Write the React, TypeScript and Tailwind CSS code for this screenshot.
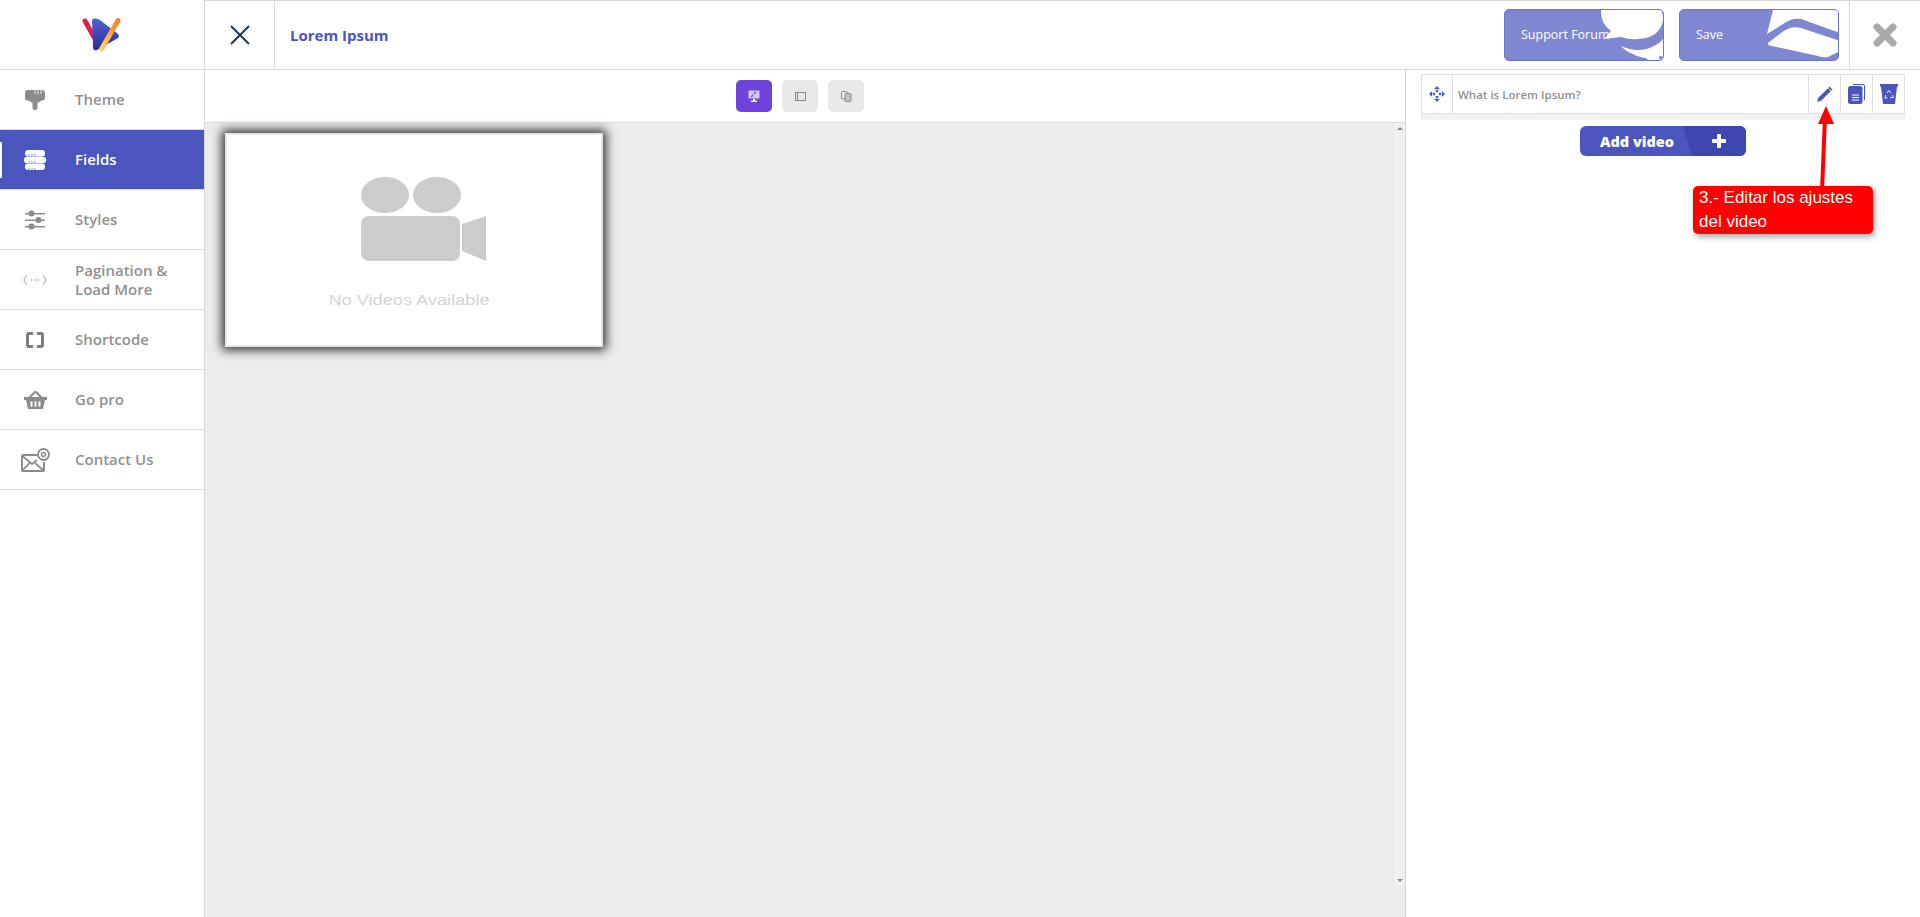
import type { ReactNode } from "react";

const Logo = () => (
  <svg width="40" height="36" viewBox="0 0 40 36">
    <defs>
      <linearGradient id="blue" x1="0" y1="0" x2="0" y2="1">
        <stop offset="0" stopColor="#4f63d2" />
        <stop offset="1" stopColor="#2a2c96" />
      </linearGradient>
      <linearGradient id="orange" x1="1" y1="0" x2="0" y2="1">
        <stop offset="0" stopColor="#f58220" />
        <stop offset="1" stopColor="#fdd267" />
      </linearGradient>
    </defs>
    <path d="M3 4 L12 20" stroke="#e0204f" strokeWidth="5" strokeLinecap="round" />
    <path d="M13 1.500 Q10 1 10 4 L11 30 Q11 34 15 33 L36 21 Q38 19 36 17 L18 3 Q15 1 13 1.500Z" fill="url(#blue)" />
    <path d="M36 3.500 L19.500 32" stroke="url(#orange)" strokeWidth="5" strokeLinecap="round" />
  </svg>
);

const BrushIcon = () => (
  <svg width="20" height="20" viewBox="0 0 20 20" fill="#8b8b8b">
    <path d="M3 0H17Q20 0 20 3V8Q20 10 17 10.500L13 12.500H7L3 10.500Q0 10 0 8V3Q0 0 3 0z" />
    <path d="M7.500 12h5v6q0 2-2.500 2t-2.500-2z" />
    <path d="M10 0v4M13 0v5M16 0v4" stroke="#fff" strokeWidth="0.800" />
  </svg>
);

const FieldsIcon = () => (
  <svg width="22" height="20" viewBox="0 0 22 20" fill="#fff">
    <rect x="1" y="0" width="20" height="6.400" rx="3" />
    <rect x="0" y="6.800" width="22" height="6.400" rx="3" />
    <rect x="1" y="13.600" width="20" height="6.400" rx="3" />
    <path d="M5 4v2M8 4v2M11 4v2M5 11v2M8 11v2M11 11v2M5 18v2M8 18v2M11 18v2" stroke="#4a55bd" strokeWidth="0.700" />
  </svg>
);

const SlidersIcon = () => (
  <svg width="20" height="20" viewBox="0 0 20 20" fill="#8b8b8b">
    <rect x="0" y="3" width="20" height="1.500" />
    <rect x="0" y="9.500" width="20" height="1.500" />
    <rect x="0" y="16" width="20" height="1.500" />
    <circle cx="6.500" cy="3.500" r="3" />
    <circle cx="13.500" cy="10" r="3" />
    <circle cx="6.500" cy="16.500" r="3" />
  </svg>
);

const DotsIcon = () => (
  <svg width="24" height="12" viewBox="0 0 24 12" fill="none" stroke="#8b8b8b" strokeWidth="0.800">
    <path d="M4 1 L0.800 6 L4 11 M20 1 L23.200 6 L20 11" />
    <path d="M8 6h1M11.500 6h1M15 6h1" strokeWidth="1.600" />
  </svg>
);

const BracketsIcon = () => (
  <svg width="18" height="16" viewBox="0 0 18 16" fill="none" stroke="#7d7d7d" strokeWidth="3">
    <path d="M7 1.500H3Q1.500 1.500 1.500 3v10q0 1.500 1.500 1.500h4M11 1.500h4q1.500 0 1.500 1.500v10q0 1.500-1.500 1.500h-4" />
  </svg>
);

const BasketIcon = () => (
  <svg width="23" height="18" viewBox="0 0 23 18" fill="#8b8b8b">
    <path d="M0 6h23v3H0z" />
    <path d="M2 9h19l-2 9H4zM6.500 10.500v5h2v-5zM10.500 10.500v5h2v-5zM14.500 10.500v5h2v-5z" fillRule="evenodd" />
    <path d="M5 7l6.500-6.500L18 7" fill="none" stroke="#8b8b8b" strokeWidth="2" />
  </svg>
);

const MailIcon = () => (
  <svg width="29" height="24" viewBox="0 0 29 24" fill="none" stroke="#8b8b8b" strokeWidth="1.500">
    <path d="M16 7H2.500Q1 7 1 8.500v13.500q0 1 1 1h20q1 0 1-1v-8" strokeWidth="2" />
    <path d="M1.500 8L11 16l5-4M1.500 22.500L9 14.500M22.500 22.500L14 15" strokeWidth="1.800" />
    <circle cx="22.500" cy="6.500" r="5.500" strokeWidth="1.800" />
    <circle cx="22.500" cy="6.500" r="2" />
  </svg>
);

const MoveIcon = () => (
  <svg width="16" height="16" viewBox="0 0 16 16" fill="#4a55bd">
    <path d="M8 0l3 3.200H5zM8 16l-3-3.200h6zM0 8l3.200-3v6zM16 8l-3.200 3V5z" />
    <rect x="6.800" y="4" width="2.400" height="2" />
    <rect x="6.800" y="10" width="2.400" height="2" />
    <rect x="4" y="6.800" width="2" height="2.400" />
    <rect x="10" y="6.800" width="2" height="2.400" />
  </svg>
);

const PencilIcon = () => (
  <svg width="18" height="18" viewBox="0 0 18 18">
    <path d="M13.500 1.500l3 3L5 16l-4 1 1-4z" fill="#4a55bd" stroke="#c9cdf0" strokeWidth="0.800" />
    <path d="M12 3l3 3" stroke="#fff" strokeWidth="0.800" />
  </svg>
);

const CopyIcon = () => (
  <svg width="17" height="20" viewBox="0 0 17 20">
    <path d="M5 0.500h10q1.500 0 1.500 1.500v14" fill="none" stroke="#4a55bd" strokeWidth="1" />
    <rect x="0" y="2" width="14.500" height="18" rx="2.500" fill="#4a55bd" />
    <path d="M4 11h7M4 13.500h7M4 16h7" stroke="#fff" strokeWidth="1" />
  </svg>
);

const RecycleIcon = () => (
  <svg width="18" height="20" viewBox="0 0 18 20">
    <path d="M0 0h18v2.500h-1L15 20H3L1 2.500H0z" fill="#4a55bd" />
    <path d="M7 9l2-2.500L11 9M12.500 11l.800 2.500h-3M7.500 14H4.800l1.200-3" fill="none" stroke="#fff" strokeWidth="0.900" />
  </svg>
);

const DisplayIcon = ({ color }: { color: string }) => (
  <svg width="12" height="12" viewBox="0 0 12 12">
    <rect x="0.500" y="0.500" width="11" height="8" fill={color} opacity="0.700" />
    <path d="M3 7l2-2M6 4l2-2" stroke="#6f42dc" strokeWidth="1.200" />
    <path d="M5 9h2v1.500h2V12H3v-1.500h2z" fill={color} />
  </svg>
);

const TabletIcon = () => (
  <svg width="11" height="9" viewBox="0 0 11 9" fill="none" stroke="#8a8a8a">
    <rect x="0.500" y="0.500" width="10" height="8" />
    <path d="M2.500 0.500v8" strokeWidth="1" />
  </svg>
);

const PhonesIcon = () => (
  <svg width="11" height="11" viewBox="0 0 11 11" fill="none" stroke="#8a8a8a">
    <rect x="0.500" y="0.500" width="6" height="7.500" rx="1" />
    <rect x="4" y="2.500" width="6" height="8" rx="1" fill="#c2c2c2" />
  </svg>
);

const items: { label: ReactNode; icon: ReactNode; active?: boolean }[] = [
  { label: "Theme", icon: <BrushIcon /> },
  { label: "Fields", icon: <FieldsIcon />, active: true },
  { label: "Styles", icon: <SlidersIcon /> },
  { label: <>Pagination &<br />Load More</>, icon: <DotsIcon /> },
  { label: "Shortcode", icon: <BracketsIcon /> },
  { label: "Go pro", icon: <BasketIcon /> },
  { label: "Contact Us", icon: <MailIcon /> },
];

function Sidebar() {
  return (
    <aside className="w-[205px] shrink-0 border-r border-[#d9d9d9] bg-white">
      <div className="h-[70px] flex items-center justify-center border-b border-[#d9d9d9] pr-[1px]">
        <Logo />
      </div>
      {items.map((item, i) => (
        <div
          key={i}
          className={`relative h-[60px] flex items-center border-b border-[#dcdcdc] ${item.active ? "bg-[#4a55bd] text-white" : "text-[#909090]"}`}
        >
          {item.active && <div className="absolute left-0 top-[12px] w-[2px] h-[36px] bg-white" />}
          <div className="w-[70px] mr-[5px] flex justify-center shrink-0">{item.icon}</div>
          <div className="text-[15px] leading-[19px] font-semibold">{item.label}</div>
        </div>
      ))}
    </aside>
  );
}

function Header() {
  return (
    <header className="h-[70px] flex border-t border-b border-[#d9d9d9] bg-white">
      <div className="w-[70px] flex items-center justify-center border-r border-[#d9d9d9]">
        <svg width="20" height="20" viewBox="0 0 20 20" stroke="#1d3557" strokeWidth="2">
          <path d="M1 1l18 18M19 1L1 19" />
        </svg>
      </div>
      <div className="flex-1 flex items-center pl-[15px] text-[15px] font-bold text-[#4a55bd]">Lorem Ipsum</div>
      <div className="flex items-center gap-[15px] pr-[10px]">
        <button className="relative w-[160px] h-[52px] rounded-[5px] border border-[#6a74c9] bg-[#8087d2] text-left pl-[16px] text-[12.5px] text-white overflow-hidden">
          Support Forum
          <svg className="absolute left-0 top-0" width="160" height="52" viewBox="0 0 160 52" fill="#fff">
            <path d="M96 0Q95 13 106 21L99 29 116 27Q125 30 133 29Q148 28 153 21Q158 15 158 9Q158 3 156 0z" />
            <path d="M116 36Q125 40 133 40Q142 40 149 36Q155 33 158 29V51H144L141 48Q133 47 128 44Q120 41 116 36z" />
            <circle cx="156" cy="48" r="2" fill="#8087d2" />
          </svg>
        </button>
        <button className="relative w-[160px] h-[52px] rounded-[5px] border border-[#6a74c9] bg-[#8087d2] text-left pl-[16px] text-[12.5px] text-white overflow-hidden">
          Save
          <svg className="absolute left-0 top-0" width="160" height="52" viewBox="0 0 160 52" fill="#fff">
            <path d="M93 0L87 24 103 14Q111 8 121 9L160 23V0z" />
            <path d="M88 33L101 23Q111 15 121 18L160 31V41L148 47Q142 48 138 46L92 36Q87 35 88 33z" />
          </svg>
        </button>
      </div>
      <div className="w-[71px] flex items-center justify-center border-l border-[#d9d9d9]">
        <svg width="24" height="24" viewBox="0 0 24 24" stroke="#a9a9a9" strokeWidth="7" strokeLinecap="round">
          <path d="M4 4l16 16M20 4L4 20" />
        </svg>
      </div>
    </header>
  );
}

function Preview() {
  return (
    <section className="w-[1201px] shrink-0 flex flex-col border-r border-[#d5d5d5]">
      <div className="h-[53px] shrink-0 flex items-start justify-center gap-[10px] pt-[10px] pr-[10px] border-b border-[#dcdcdc] bg-white">
        <button className="w-[36px] h-[32px] rounded-[5px] bg-[#6f42dc] flex items-center justify-center"><DisplayIcon color="#fff" /></button>
        <button className="w-[36px] h-[32px] rounded-[5px] bg-[#e8e8e8] flex items-center justify-center"><TabletIcon /></button>
        <button className="w-[36px] h-[32px] rounded-[5px] bg-[#e8e8e8] flex items-center justify-center"><PhonesIcon /></button>
      </div>
      <div className="flex-1 flex bg-[#ececec]">
        <div className="flex-1 pl-[20px] pt-[10px]">
          <div className="w-[378px] h-[214px] bg-white border-2 border-[#e6e6e6] shadow-[0_0_10px_3px_rgba(0,0,0,0.8)] flex flex-col items-center">
            <svg className="mt-[42px] ml-[19px]" width="126" height="86" viewBox="0 0 126 86" fill="#cccccc">
              <ellipse cx="24" cy="18" rx="24" ry="18" />
              <ellipse cx="76" cy="18" rx="24" ry="18" />
              <rect x="0" y="39" width="99" height="45" rx="8" />
              <path d="M101 47L125 39V84L101 74z" />
            </svg>
            <div className="mt-[27px] ml-[-10px] scale-x-[1.3] font-['Liberation_Sans'] text-[14px] leading-[20px] text-[#d4d4d4]">No Videos Available</div>
          </div>
        </div>
        <div className="w-[11px] h-[763px] bg-[#f0f0f0] flex flex-col justify-between items-center py-[4px]">
          <div className="w-0 h-0 border-x-[3px] border-x-transparent border-b-[3px] border-b-[#8a8a8a]" />
          <div className="w-0 h-0 border-x-[3px] border-x-transparent border-t-[3px] border-t-[#8a8a8a]" />
        </div>
      </div>
    </section>
  );
}

function Panel() {
  return (
    <section className="relative flex-1 bg-white pt-[4px]">
      <div className="ml-[15px] w-[484px] border-b-[6px] border-[#f2f2f2]">
        <div className="h-[40px] flex border border-[#dfdfdf] text-[11.5px] font-semibold text-[#8f8f8f]">
          <div className="w-[31px] flex items-center justify-center border-r border-[#dfdfdf]"><MoveIcon /></div>
          <div className="flex-1 flex items-center pl-[5px] pt-[1px]">What is Lorem Ipsum?</div>
          <div className="w-[32px] flex items-center justify-center border-l border-[#dfdfdf]"><PencilIcon /></div>
          <div className="w-[32px] flex items-center justify-center border-l border-[#dfdfdf]"><CopyIcon /></div>
          <div className="w-[32px] flex items-center justify-center border-l border-[#dfdfdf]"><RecycleIcon /></div>
        </div>
      </div>
      <div className="mt-[6px] ml-[174px] relative w-[166px] h-[30px] rounded-[6px] bg-[#4a55bd] overflow-hidden flex items-center text-white">
        <div className="absolute inset-0 bg-[#3e46b0] [clip-path:polygon(103px_0,100%_0,100%_100%,112px_100%)]" />
        <span className="relative ml-[20px] pt-[1px] text-[14.5px] font-extrabold">Add video</span>
        <svg className="absolute left-[132px] top-[8px]" width="14" height="14" viewBox="0 0 14 14" fill="#fff">
          <path d="M5 1q0-1 1-1h2q1 0 1 1v4h4q1 0 1 1v2q0 1-1 1H9v4q0 1-1 1H6q-1 0-1-1V9H1q-1 0-1-1V6q0-1 1-1h4z" />
        </svg>
      </div>
      {/* annotation over the panel */}
      <svg className="absolute left-[399px] top-[-3px]" width="40" height="130" viewBox="0 0 40 130">
        <path d="M17 124L20 50" stroke="#ff0000" strokeWidth="4" />
        <path d="M21 39L13 57H29z" fill="#ff0000" />
      </svg>
      <div className="absolute left-[287px] top-[116px] w-[180px] h-[48px] rounded-[5px] bg-[#ff0000] px-[6px] font-['Liberation_Sans'] text-[17px] leading-[24px] text-white shadow-[2px_3px_6px_rgba(0,0,0,0.35)]">
        3.- Editar los ajustes del video
      </div>
    </section>
  );
}

export default function App() {
  return (
    <div className="w-[1920px] h-[917px] overflow-hidden flex bg-white font-['Open_Sans',sans-serif]">
      <Sidebar />
      <main className="flex-1 flex flex-col min-w-0">
        <Header />
        <div className="flex-1 flex min-h-0">
          <Preview />
          <Panel />
        </div>
      </main>
    </div>
  );
}
